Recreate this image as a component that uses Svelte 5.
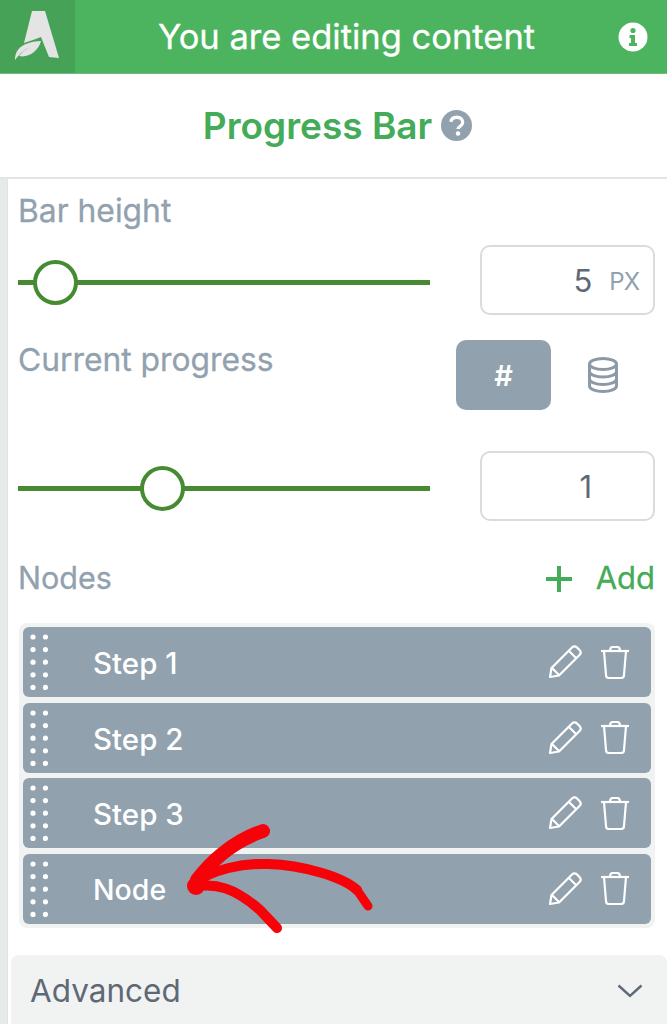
<script>
	let nodes = ['Step 1', 'Step 2', 'Step 3', 'Node'];
</script>

<div class="page">
	<header class="topbar">
		<div class="logo">
			<svg width="75" height="73" viewBox="0 0 75 73" fill="#e4e4e4">
				<path d="M32 11H45L59 58 49 57 41 37 33 40 24 43z" />
				<path d="M15 60C15 48 24 42 41 41 38 52 28 58 19 56 24 50 29 47 33 46 26 48 20 53 15 60z" />
			</svg>
		</div>
		<div class="banner">You are editing content</div>
		<svg class="info" width="30" height="30" viewBox="0 0 30 30">
			<ellipse cx="15" cy="15" rx="14.500" ry="14.500" fill="#fff" />
			<circle cx="15" cy="8.500" r="2.600" fill="#4cb45f" />
			<path d="M11.500 13h5.500v8h2v3h-8v-3h2v-5h-1.500z" fill="#4cb45f" />
		</svg>
	</header>

	<div class="title">
		<h1>Progress Bar</h1>
		<svg width="31" height="31" viewBox="0 0 30 30">
			<circle cx="15" cy="15" r="15" fill="#92a1ae" />
			<path d="M9.500 11.500c.5-3 3-4.500 5.800-4.500 3.200 0 5.700 2 5.700 4.800 0 4-4.500 3.800-4.500 6.700" fill="none" stroke="#fff" stroke-width="3.200" />
			<circle cx="16.500" cy="22.800" r="2.200" fill="#fff" />
		</svg>
	</div>

	<main class="panel">
		<div class="label bar-label">Bar height</div>
		<div class="control first">
			<div class="slider">
				<span class="thumb" style="left: 15px"></span>
			</div>
			<div class="field"><span class="value">5</span><span class="unit">PX</span></div>
		</div>

		<div class="progress-head">
			<div class="label">Current progress</div>
			<div class="toggle">
				<div class="hash">#</div>
				<svg class="db" width="32" height="36" viewBox="0 0 32 36" fill="none" stroke="#8c9aa8" stroke-width="3">
					<ellipse cx="16" cy="7" rx="13.500" ry="5.500" />
					<path d="M2.500 7v22c0 3 6 5.500 13.500 5.500S29.500 32 29.500 29V7" />
					<path d="M2.500 14.500c0 3 6 5.500 13.500 5.500s13.500-2.500 13.500-5.500" />
					<path d="M2.500 22c0 3 6 5.500 13.500 5.500S29.500 25 29.500 22" />
				</svg>
			</div>
		</div>

		<div class="control second">
			<div class="slider">
				<span class="thumb" style="left: 122px"></span>
			</div>
			<div class="field"><span class="value one">1</span></div>
		</div>

		<div class="nodes-head">
			<div class="label nodes-label">Nodes</div>
			<div class="add"><span class="plus"></span>Add</div>
		</div>

		<div class="list">
			{#each nodes as node}
				<div class="row">
					<svg class="grip" width="18" height="58" viewBox="0 0 18 58" fill="#fff">
						{#each [0, 1, 2, 3, 4] as r}
							<circle cx="3" cy={4 + r * 12.6} r="2.600" />
							<circle cx="15.500" cy={4 + r * 12.6} r="2.600" />
						{/each}
					</svg>
					<span class="name" class:short={node === 'Node'}>{node}</span>
					<svg class="pencil" width="34" height="34" viewBox="0 0 34 34" fill="none" stroke="#fff" stroke-width="2.200" stroke-linejoin="round">
						<path d="M2 32l1.500-9L24 2.500c1.500-1.500 3.500-1.500 5 0l2.500 2.500c1.500 1.500 1.500 3.500 0 5L11 30.500z" />
						<path d="M21 6l7.500 7.500M4 23l7 7" />
					</svg>
					<svg class="trash" width="30" height="33" viewBox="0 0 30 33" fill="none" stroke="#fff" stroke-width="2.200" stroke-linejoin="round">
						<path d="M1 5h28" />
						<path d="M4 5l2 24c0 2 1 3 3 3h12c2 0 3-1 3-3l2-24" />
						<path d="M10 5c0-2.500 1-4 3-4h4c2 0 3 1.500 3 4" />
					</svg>
				</div>
			{/each}
		</div>

		<div class="advanced">
			<span>Advanced</span>
			<svg width="26" height="14" viewBox="0 0 26 14" fill="none" stroke="#5f6875" stroke-width="2.400">
				<path d="M1.500 1.500L13 12 24.500 1.500" />
			</svg>
		</div>
	</main>

	<svg class="arrow" width="210" height="125" viewBox="0 0 210 125" fill="none" stroke="#f60209" stroke-linecap="round" stroke-linejoin="round">
		<path d="M14 58C26 42 48 20 80 9" stroke-width="14" />
		<path d="M10 62C30 47 60 41 85 42 120 43 160 55 174 68" stroke-width="10" />
		<path d="M174 68L185 84" stroke-width="9" />
		<path d="M10 65C32 60 52 66 77 88L94 106" stroke-width="10" />
		<circle cx="13" cy="64" r="9" fill="#f60209" stroke="none" />
	</svg>
</div>

<style>
	:global(body) {
		margin: 0;
		background: #fff;
	}
	.page {
		position: relative;
		width: 667px;
		height: 1024px;
		overflow: hidden;
		font-family: Inter, 'Liberation Sans', sans-serif;
	}
	.topbar {
		display: flex;
		align-items: center;
		height: 73px;
		background: #4cb45f;
		border-bottom: 1px solid #6bbd7a;
	}
	.logo {
		width: 75px;
		height: 73px;
		background: #46a257;
	}
	.logo svg {
		display: block;
	}
	.banner {
		flex: 1;
		text-align: center;
		color: #fff;
		font-size: 34.5px;
		-webkit-text-stroke: 0.3px #fff;
	}
	.info {
		margin-right: 19px;
	}
	.title {
		display: flex;
		align-items: center;
		justify-content: center;
		gap: 9px;
		height: 103px;
		border-bottom: 2px solid #e0e6e6;
		padding-left: 8px;
	}
	h1 {
		margin: 0;
		font-size: 37px;
		font-weight: 600;
		color: #44ab58;
	}
	.panel {
		height: 846px;
		margin-left: 7px;
		border-left: 1px solid #dfe5e5;
		box-shadow: -7px 0 0 #e6ebe9;
		padding: 0 12px 0 10px;
	}
	.label {
		font-size: 31.800px;
		color: #92a1ae;
		-webkit-text-stroke: 0.3px #92a1ae;
	}
	.nodes-label {
		font-size: 30.500px;
	}
	.bar-label {
		padding-top: 12px;
		height: 54px;
	}
	.control {
		display: flex;
		align-items: center;
		justify-content: space-between;
	}
	.slider {
		position: relative;
		width: 412px;
		height: 5px;
		margin-top: 4px;
		background: #468a32;
	}
	.thumb {
		position: absolute;
		top: -20px;
		width: 37px;
		height: 37px;
		border: 4px solid #468a32;
		border-radius: 50%;
		background: #fff;
	}
	.field {
		box-sizing: border-box;
		display: flex;
		align-items: center;
		justify-content: flex-end;
		width: 175px;
		height: 70px;
		border: 2px solid #d9dcdc;
		border-radius: 10px;
		padding-right: 14px;
	}
	.value {
		font-size: 31px;
		color: #5f6875;
	}
	.value.one {
		margin-right: 47px;
	}
	.unit {
		font-size: 24px;
		color: #92a1ae;
		margin-left: 17px;
		padding-top: 3px;
		letter-spacing: -1px;
	}
	.progress-head {
		display: flex;
		justify-content: space-between;
		align-items: flex-start;
		margin-top: 25px;
		height: 111px;
	}
	.toggle {
		display: flex;
		align-items: center;
		padding-right: 36px;
		gap: 36px;
		margin-left: -1px;
	}
	.hash {
		display: flex;
		align-items: center;
		justify-content: center;
		width: 95px;
		height: 70px;
		background: #92a1ae;
		border-radius: 10px;
		color: #fff;
		font-size: 29px;
		font-weight: 600;
	}
	.nodes-head {
		display: flex;
		justify-content: space-between;
		align-items: center;
		margin-top: 34px;
		height: 44px;
	}
	.add {
		display: flex;
		align-items: center;
		font-size: 31px;
		color: #44ab58;
		-webkit-text-stroke: 0.3px #44ab58;
	}
	.plus {
		position: relative;
		width: 26px;
		height: 4px;
		background: #44ab58;
		margin-right: 24px;
		margin-top: 4px;
	}
	.plus::after {
		content: '';
		position: absolute;
		left: 11px;
		top: -11px;
		width: 4px;
		height: 26px;
		background: #44ab58;
	}
	.list {
		display: flex;
		flex-direction: column;
		gap: 5.500px;
		margin: 24px 0 0 1px;
		padding: 4px;
		background: #f1f3f3;
		border-radius: 8px;
		width: 636px;
		box-sizing: border-box;
	}
	.row {
		display: flex;
		align-items: center;
		height: 70px;
		background: #92a1ae;
		border-radius: 6px;
		padding: 0 21px 0 7px;
		color: #fff;
	}
	.name {
		flex: 1;
		margin-left: 45px;
		padding-top: 2px;
		font-size: 29.500px;
		font-weight: 500;
	}
	.name.short {
		font-size: 28.500px;
	}
	.pencil {
		margin-right: -1px;
	}
	.trash {
		margin-left: 19px;
	}
	.advanced {
		display: flex;
		align-items: center;
		justify-content: space-between;
		box-sizing: border-box;
		height: 72px;
		margin: 27px -12px 0 -7px;
		padding: 0 24px 0 19px;
		background: #f1f3f3;
		border-radius: 8px 8px 0 0;
		color: #5f6875;
		font-size: 31.500px;
	}
	.arrow {
		position: absolute;
		left: 183px;
		top: 822px;
	}
</style>
